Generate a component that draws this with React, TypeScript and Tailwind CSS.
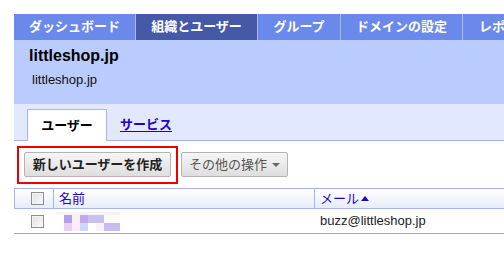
import React from 'react';

const JP = { fontFamily: '"Liberation Sans", "Noto Sans CJK JP", sans-serif' };

const navTabs = [
  { label: 'ダッシュボード', w: 'w-[121px] justify-center', active: false },
  { label: '組織とユーザー', w: 'w-[122px] justify-center', active: true },
  { label: 'グループ', w: 'w-[83px] justify-center', active: false },
  { label: 'ドメインの設定', w: 'w-[122px] justify-center', active: false },
  { label: 'レポート', w: 'w-[122px] justify-start pl-[16px]', active: false },
];

const Checkbox = () => (
  <div className="w-[13px] h-[13px] border border-[#8e8e8e] bg-gradient-to-br from-[#e0e0e0] to-[#fafafa] shadow-[inset_0_0_0_1px_#f4f4f4]" />
);

// pixelated (blurred) name
const mosaic = [
  ['bg-white', 'bg-[#b3a0ec]', 'bg-[#f9eef9]', 'bg-[#c1a8ec]', 'bg-[#c8c0f1]', 'bg-[#c8c0f1]', 'bg-[#fcfcf6]', 'bg-[#fcfcf6]'],
  ['bg-white', 'bg-[#e8d0f5]', 'bg-[#fcecf8]', 'bg-[#c9d8fc]', 'bg-white', 'bg-[#fcf0f8]', 'bg-[#c8bcf0]', 'bg-[#c8bcf0]'],
];

export default function App() {
  return (
    <div className="w-[504px] h-[266px] bg-white overflow-hidden pt-[14px] pl-[14px]" style={JP}>
      {/* top nav */}
      <div className="flex h-[26px] bg-[#6a89ea] w-[600px]">
        {navTabs.map((t, i) => (
          <div
            key={t.label}
            className={`${t.w} shrink-0 flex items-center whitespace-nowrap text-white text-[13px] font-bold ${i > 0 ? 'border-l border-[#a9b9f1]' : ''} ${t.active ? 'bg-[#4659a7]' : ''}`}
          >
            {t.label}
          </div>
        ))}
      </div>

      {/* header */}
      <div className="bg-[#bacbfd] h-[64px] pl-[15px] pt-[6px]">
        <div className="text-[16px] font-bold text-black leading-[20px]">littleshop.jp</div>
        <div className="text-[13px] text-[#111] leading-[16px] mt-[6px] pl-[3px]">littleshop.jp</div>
      </div>

      {/* sub tabs */}
      <div className="bg-[#e2e9fe] h-[37px] flex items-end border-b border-[#a3b6e9] pl-[13px]">
        <div className="w-[80px] h-[32px] bg-white border border-b-0 border-[#a3b6e9] -mb-px flex items-center justify-center text-[13px] font-bold text-black">
          ユーザー
        </div>
        <div className="h-[31px] flex items-center ml-[13px] text-[13px] font-bold text-[#2200cc] underline underline-offset-2">
          サービス
        </div>
      </div>

      {/* actions */}
      <div className="flex items-center h-[47px] pl-[3px] gap-[3px]">
        <div className="border-2 border-[#ee0000] w-[161px] h-[38px] flex items-center justify-center">
          <button className="h-[25px] w-[147px] whitespace-nowrap border border-[#b4b4b4] rounded-[2px] bg-gradient-to-b from-[#f6f6f6] to-[#dedede] text-[13px] font-bold text-[#222] flex items-center justify-center">
            新しいユーザーを作成
          </button>
        </div>
        <button className="h-[25px] w-[107px] whitespace-nowrap border border-[#b4b4b4] rounded-[2px] bg-gradient-to-b from-[#f6f6f6] to-[#dedede] text-[13px] text-[#555] flex items-center justify-center gap-[5px]">
          その他の操作
          <span className="w-0 h-0 border-l-[4px] border-r-[4px] border-t-[4px] border-l-transparent border-r-transparent border-t-[#666] mt-[1px]" />
        </button>
      </div>

      {/* table */}
      <div className="w-[600px]">
        <div className="flex h-[21px] border border-[#a3b6e9] bg-gradient-to-b from-white to-[#e8ecf7]">
          <div className="w-[39px] flex items-center pl-[16px] border-r border-[#a3b6e9]">
            <Checkbox />
          </div>
          <div className="w-[260px] flex items-center pl-[5px] text-[13px] text-[#2200cc]">名前</div>
          <div className="flex items-center pl-[5px] border-l border-[#a3b6e9] text-[13px] text-[#2200cc]">
            メール
            <span className="ml-[2px] w-0 h-0 border-l-[4px] border-r-[4px] border-b-[5px] border-l-transparent border-r-transparent border-b-[#2200cc]" />
          </div>
        </div>
        <div className="flex h-[25px] border-b border-[#a9a9a9]">
          <div className="w-[40px] flex items-center pl-[17px]">
            <Checkbox />
          </div>
          <div className="w-[261px] pl-[2px] pt-[3px]">
            <div className="w-[64px] h-[3px] bg-[#f3f3f9]" />
            {mosaic.map((row, r) => (
              <div key={r} className="flex">
                {row.map((c, k) => (
                  <div key={k} className={`w-[8px] h-[8px] ${c}`} />
                ))}
              </div>
            ))}
          </div>
          <div className="pl-[5px] flex items-center text-[13px] text-[#222]">buzz@littleshop.jp</div>
        </div>
      </div>
    </div>
  );
}
